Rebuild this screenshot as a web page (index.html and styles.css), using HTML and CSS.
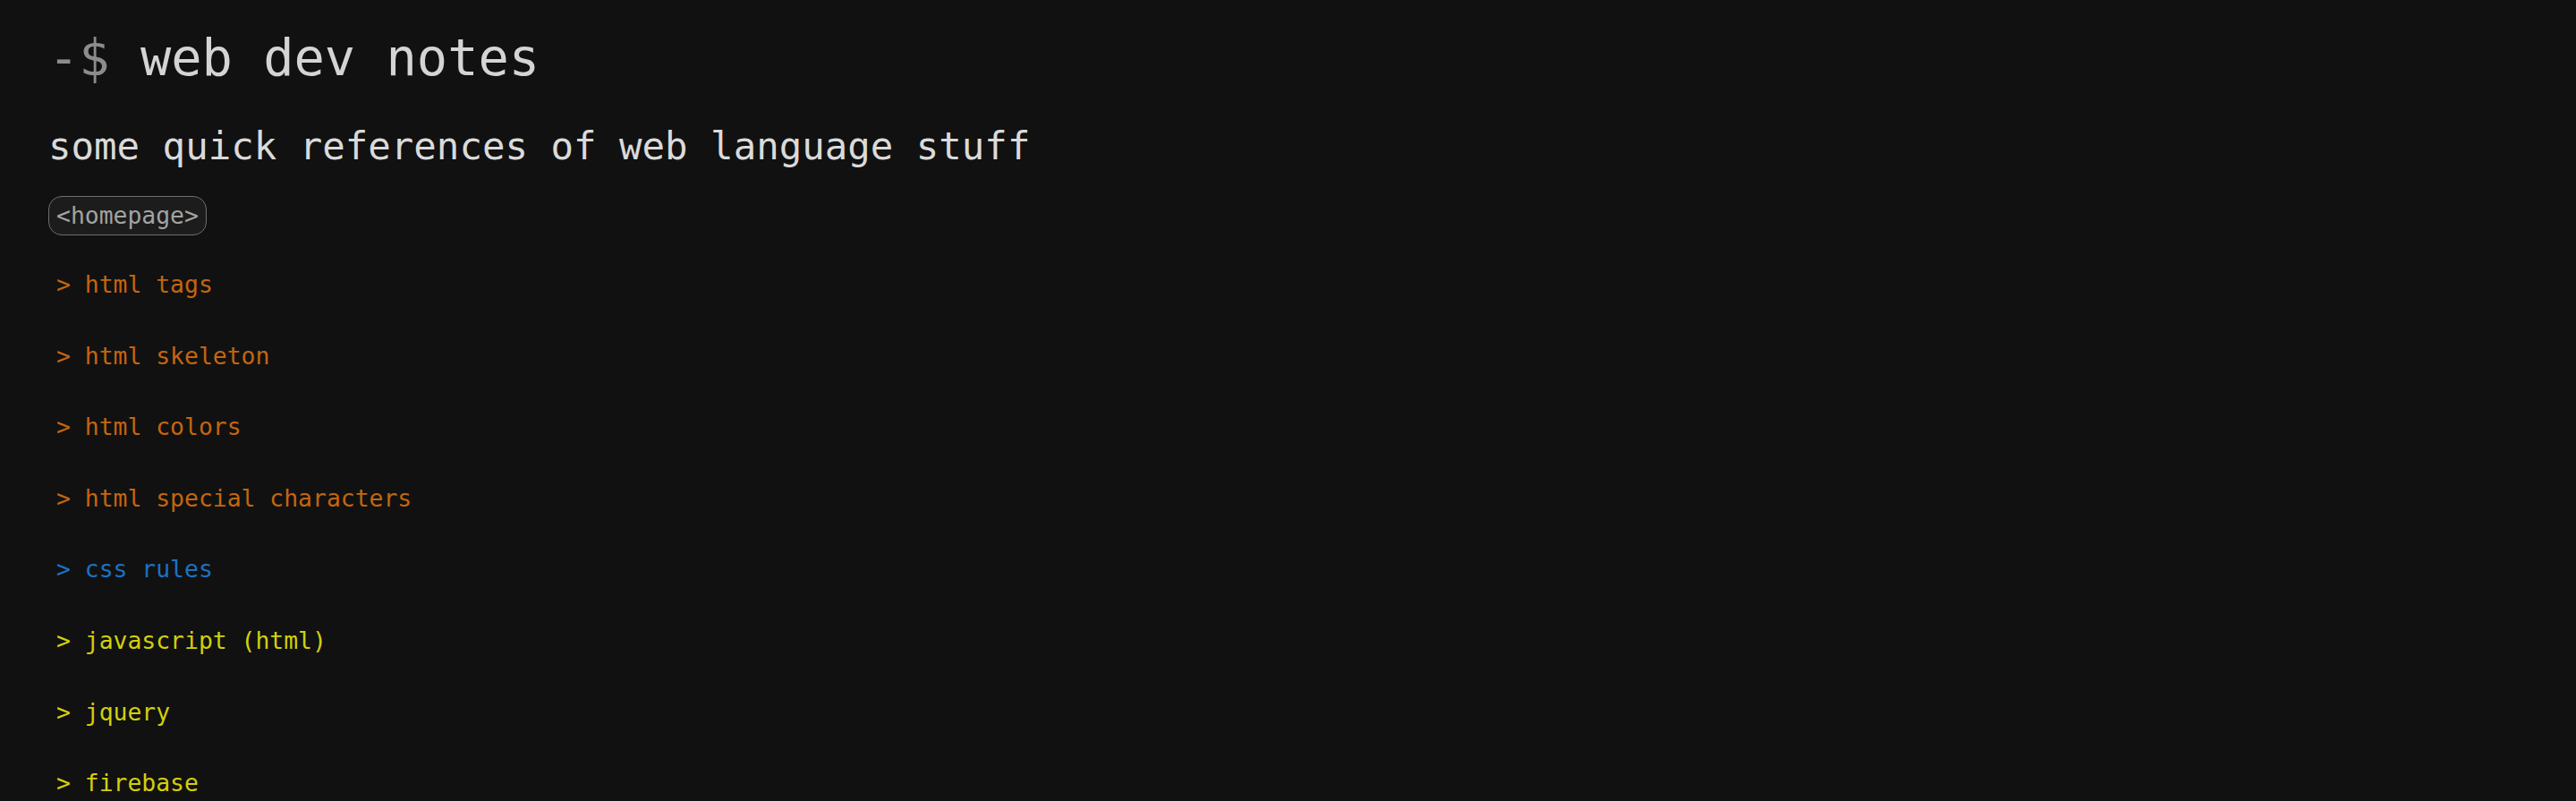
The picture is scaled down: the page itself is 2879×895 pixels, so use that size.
FILE: index.html
```html
<!DOCTYPE html>
<html lang="en">
<head>
<meta charset="utf-8">
<title>web dev notes</title>
<link rel="stylesheet" href="styles.css">
</head>
<body>
<main class="page">
  <h1 class="title"><span class="prompt">-$</span> web dev notes</h1>
  <h2 class="subtitle">some quick references of web language stuff</h2>
  <div class="nav"><a class="home" href="#">&lt;homepage&gt;</a></div>
  <ul class="notes">
    <li class="note html"><a href="#">&gt; html tags</a></li>
    <li class="note html"><a href="#">&gt; html skeleton</a></li>
    <li class="note html"><a href="#">&gt; html colors</a></li>
    <li class="note html"><a href="#">&gt; html special characters</a></li>
    <li class="note css"><a href="#">&gt; css rules</a></li>
    <li class="note js"><a href="#">&gt; javascript (html)</a></li>
    <li class="note js"><a href="#">&gt; jquery</a></li>
    <li class="note js"><a href="#">&gt; firebase</a></li>
  </ul>
</main>
</body>
</html>
```
FILE: styles.css
```css
html, body {
  margin: 0;
  padding: 0;
  background: #111111;
  height: 100%;
  overflow: hidden;
}

body {
  font-family: "DejaVu Sans Mono", "Liberation Mono", monospace;
  color: #d6d6d6;
}

.page {
  padding: 31px 0 0 54px;
  display: flex;
  flex-direction: column;
  align-items: flex-start;
}

.title {
  margin: 0;
  font-size: 57px;
  line-height: 66px;
  font-weight: normal;
  color: #d4d4d4;
  white-space: pre;
}

.prompt {
  color: #8c8c8c;
}

.subtitle {
  margin: 42px 0 0 0;
  font-size: 42.4px;
  line-height: 50px;
  font-weight: normal;
  color: #dadada;
}

.nav {
  margin-top: 30px;
}

.home {
  display: inline-block;
  font-size: 26.4px;
  line-height: 42px;
  padding: 0 8px;
  border: 1px solid #6e6e6e;
  border-radius: 15px;
  background: #1c1c1c;
  color: #a3a3a3;
  text-decoration: none;
}

.notes {
  list-style: none;
  margin: 40px 0 0 0;
  padding: 0 0 0 9px;
  display: flex;
  flex-direction: column;
  gap: 49.6px;
}

.note {
  font-size: 26.4px;
  line-height: 30px;
  white-space: pre;
}

.note a {
  text-decoration: none;
  color: inherit;
}

.note.html {
  color: #c4650f;
}

.note.css {
  color: #1b72c2;
}

.note.js {
  color: #d2cf0c;
}
```
